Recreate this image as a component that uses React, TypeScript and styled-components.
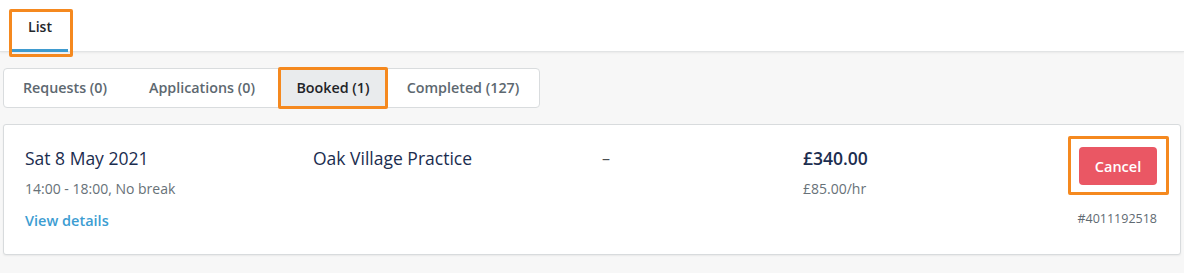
import React from "react";
import styled, { createGlobalStyle } from "styled-components";

const GlobalStyle = createGlobalStyle`
  html, body { margin: 0; padding: 0; background: #f7f7f7; }
  body { font-family: "Open Sans", "Liberation Sans", sans-serif; -webkit-font-smoothing: antialiased; }
  * { box-sizing: border-box; }
`;

const Page = styled.div`
  width: 1184px;
  height: 273px;
  background: #f7f7f7;
  overflow: hidden;
`;

const Header = styled.div`
  height: 52px;
  background: #fff;
  border-bottom: 1px solid #e2e4e5;
  box-shadow: 0 1px 2px rgba(0, 0, 0, 0.06);
  padding: 9px 0 0 9px;
  display: flex;
  align-items: flex-start;
`;

const Highlight = styled.div`
  border: 3px solid #f5891f;
  border-radius: 2px;
  display: inline-flex;
`;

const HeaderTab = styled.div`
  width: 58px;
  height: 42px;
  padding: 0 2px 2px 0;
  display: flex;
  flex-direction: column;
`;

const HeaderTabInner = styled.div`
  flex: 1;
  display: flex;
  align-items: center;
  justify-content: center;
  font-weight: 600;
  font-size: 14px;
  color: #23272b;
  border-bottom: 3px solid #3f9bcf;
  padding-bottom: 9px;
`;

const Segments = styled.div`
  margin: 16px 0 0 3px;
  width: 537px;
  height: 40px;
  background: #fff;
  border: 1px solid #d9dcde;
  border-radius: 4px;
  display: flex;
  align-items: center;
`;

const Segment = styled.div<{ $w: number }>`
  width: ${(p) => p.$w}px;
  height: 38px;
  padding-bottom: 2px;
  display: flex;
  align-items: center;
  justify-content: center;
  font-size: 14.3px;
  font-weight: 600;
  color: #5d6870;
`;

const ActiveSegment = styled.div`
  margin-top: -1px;
  margin-bottom: -1px;
  border: 3px solid #f5891f;
  border-radius: 2px;
  width: 110px;
  height: 42px;
  display: flex;
  padding: 0;
`;

const ActiveInner = styled.div`
  flex: 1;
  background: #e9ebed;
  padding-bottom: 2px;
  display: flex;
  align-items: center;
  justify-content: center;
  font-size: 14.3px;
  font-weight: 600;
  color: #1f2428;
`;

const Card = styled.div`
  margin: 16px 0 0 3px;
  width: 1178px;
  height: 131px;
  background: #fff;
  border: 1px solid #d8dbdd;
  border-radius: 3px;
  box-shadow: 0 1px 2px rgba(0, 0, 0, 0.06);
  display: grid;
  grid-template-columns: 288px 289px 201px 1fr auto;
  padding: 0 11px 0 21px;
`;

const Col = styled.div`
  display: flex;
  flex-direction: column;
  padding-top: 21px;
`;

const Primary = styled.div<{ $bold?: boolean }>`
  font-size: 17.5px;
  line-height: 24px;
  color: #1b2d4f;
  font-weight: ${(p) => (p.$bold ? 600 : 400)};
`;

const Dash = styled.div`
  font-size: 16px;
  line-height: 24px;
  color: #4b4f53;
`;

const Secondary = styled.div`
  margin-top: 9px;
  font-size: 14px;
  line-height: 19px;
  color: #677178;
`;

const Link = styled.a`
  margin-top: 13px;
  font-size: 14.5px;
  line-height: 19px;
  font-weight: 600;
  color: #3c9dd2;
  text-decoration: none;
`;

const Actions = styled.div`
  display: flex;
  flex-direction: column;
  align-items: flex-end;
  padding-top: 11px;
`;

const ButtonHighlight = styled.div`
  border: 3px solid #f5891f;
  border-radius: 2px;
  padding: 8px 9px 7px 8px;
`;

const CancelButton = styled.button`
  width: 78px;
  height: 38px;
  border: none;
  border-radius: 4px;
  background: #ea5764;
  color: #fff;
  font-family: inherit;
  font-size: 14.5px;
  font-weight: 600;
  cursor: pointer;
`;

const Ref = styled.div`
  margin-top: 15px;
  margin-right: 12px;
  font-size: 12.5px;
  color: #5f6a72;
`;

export default function App() {
  return (
    <Page>
      <GlobalStyle />
      <Header>
        <Highlight>
          <HeaderTab>
            <HeaderTabInner>List</HeaderTabInner>
          </HeaderTab>
        </Highlight>
      </Header>
      <Segments>
        <Segment $w={122}>Requests (0)</Segment>
        <Segment $w={152}>Applications (0)</Segment>
        <ActiveSegment>
          <ActiveInner>Booked (1)</ActiveInner>
        </ActiveSegment>
        <Segment $w={150}>Completed (127)</Segment>
      </Segments>
      <Card>
        <Col>
          <Primary>Sat 8 May 2021</Primary>
          <Secondary>14:00 - 18:00, No break</Secondary>
          <Link href="#">View details</Link>
        </Col>
        <Col>
          <Primary>Oak Village Practice</Primary>
        </Col>
        <Col>
          <Dash>–</Dash>
        </Col>
        <Col>
          <Primary $bold>£340.00</Primary>
          <Secondary>£85.00/hr</Secondary>
        </Col>
        <Actions>
          <ButtonHighlight>
            <CancelButton>Cancel</CancelButton>
          </ButtonHighlight>
          <Ref>#4011192518</Ref>
        </Actions>
      </Card>
    </Page>
  );
}
